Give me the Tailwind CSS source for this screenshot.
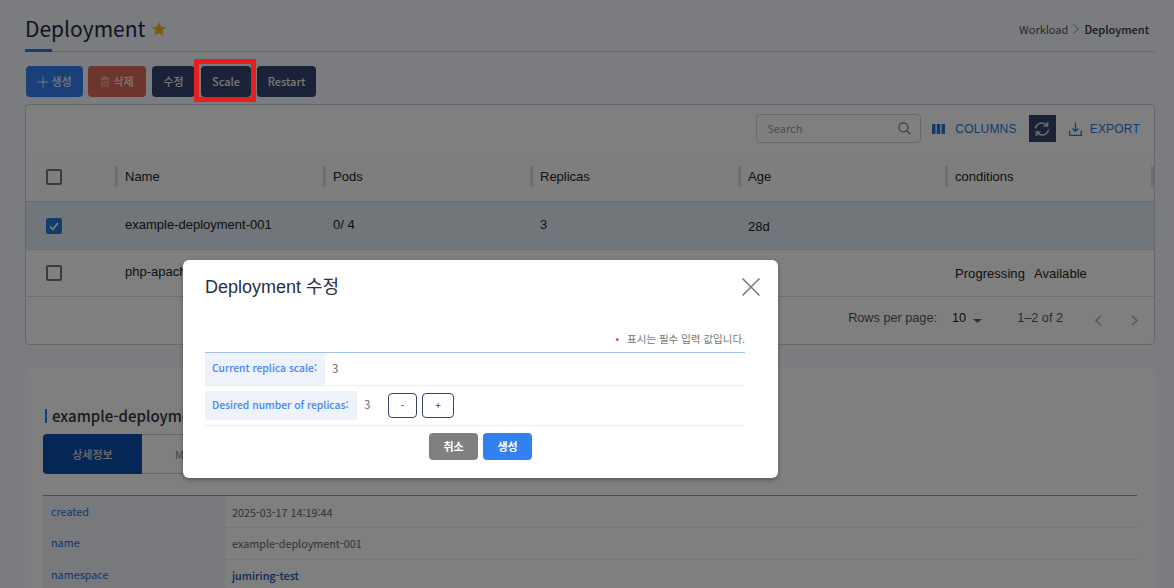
<!DOCTYPE html>
<html lang="ko">
<head>
<meta charset="utf-8">
<script src="https://cdn.jsdelivr.net/npm/@tailwindcss/browser@4"></script>
</head>
<body class="m-0 overflow-hidden font-['Noto_Sans_CJK_KR','Noto_Sans',sans-serif]">
<div class="relative h-[588px] w-[1174px] overflow-hidden bg-[#f4f8ff] pl-[25px] pr-[19px] text-[#222]">
  <header class="relative flex h-[52px] items-center justify-between border-b border-[#ccc] pt-[12px] pb-[7px]">
    <div class="flex items-center gap-[6px]">
      <h1 class="text-[21px] font-normal leading-[30px] text-[#1d2a44]">Deployment</h1>
      <svg class="mt-[2px] h-[16px] w-[16px] text-[#f5bb0b]" viewBox="0 0 24 24" fill="currentColor"><path d="M12 1.500l3.200 7 7.600.8-5.700 5.100 1.600 7.500-6.700-3.800-6.700 3.800 1.600-7.500L1.200 9.300l7.600-.8z"/></svg>
    </div>
    <div class="flex items-center pr-[6px] pt-[2px] text-[11px] leading-[16px]">
      <span class="text-[#555]">Workload</span>
      <svg class="mx-[4px] h-[10px] w-[8px] text-[#888]" viewBox="0 0 8 10" fill="none" stroke="currentColor"><path d="M1.500 .5L6.500 5l-5 4.500"/></svg>
      <span class="font-medium text-[#333]">Deployment</span>
    </div>
    <div class="absolute bottom-[-1px] left-0 h-[3px] w-[27px] bg-[#2d7ae8]"></div>
  </header>

  <div class="mt-[14px] flex h-[31px] text-[11px] font-medium leading-none text-[#f0f0f0]">
    <button class="ml-px flex w-[57px] items-center justify-center gap-[2px] rounded-[4px] bg-[#3381f0]">
      <svg class="h-[12px] w-[12px]" viewBox="0 0 12 12" fill="none" stroke="currentColor"><path d="M6 .5v11M.5 6h11"/></svg>생성</button>
    <button class="ml-[5px] flex w-[58px] items-center justify-center gap-[3px] rounded-[4px] bg-[#dc6a58]">
      <svg class="h-[11px] w-[10px] opacity-70" viewBox="0 0 10 12" fill="none" stroke="currentColor"><path d="M1.500 3h7v8h-7zM.5 3h9M3.500 3V1h3v2M3 6.500h4M3 8.500h4"/></svg>삭제</button>
    <button class="ml-[6px] w-[43px] rounded-[4px] bg-[#33446f]">수정</button>
    <button class="ml-[6px] w-[50px] rounded-[4px] bg-[#33446f]">Scale</button>
    <button class="ml-[6px] w-[59px] rounded-[4px] bg-[#33446f]">Restart</button>
  </div>

  <section class="mt-[7px] h-[241px] rounded-[4px] border border-[#ccd0d8] bg-white">
    <div class="flex h-[47px] items-center justify-end pr-[14px]">
      <div class="flex h-[29px] w-[165px] items-center justify-between rounded-[4px] border border-[#d3d3d3] pl-[10px] pr-[9px] text-[11px] text-[#999]">
        <span>Search</span>
        <svg class="h-[13px] w-[13px] text-[#777]" viewBox="0 0 14 14" fill="none" stroke="currentColor" stroke-width="1.300"><circle cx="5.800" cy="5.800" r="4.800"/><path d="M9.300 9.300L13.300 13.300"/></svg>
      </div>
      <svg class="ml-[11px] h-[10px] w-[13px] text-[#2378d6]" viewBox="0 0 13 10" fill="currentColor"><path d="M0 0h3.500v10H0zM4.700 0h3.500v10H4.700zM9.500 0H13v10H9.500z"/></svg>
      <span class="ml-[10px] font-['Liberation_Sans'] text-[12px] tracking-[0.2px] text-[#2378d6]">COLUMNS</span>
      <span class="ml-[12px] flex h-[27px] w-[27px] items-center justify-center bg-[#33446f]">
        <svg class="h-[16px] w-[16px] text-[#ddd]" viewBox="0 0 16 16" fill="none" stroke="currentColor" stroke-width="1.700"><path d="M1.500 7.500C2 4 5 2 8 2c2 0 3.500 1 4.500 2.300M14.500 8.500C14 12 11 14 8 14c-2 0-3.500-1-4.500-2.300"/><path d="M13.500 1v4h-4M2.500 15v-4h4"/></svg>
      </span>
      <svg class="ml-[13px] h-[14px] w-[13px] text-[#2378d6]" viewBox="0 0 13 14" fill="none" stroke="currentColor" stroke-width="1.200"><path d="M6.500 .5v8.500M3.500 6.500l3 3 3-3M.7 8.500v4.800h11.600V8.500"/></svg>
      <span class="ml-[8px] font-['Liberation_Sans'] text-[12px] tracking-[0.2px] text-[#2378d6]">EXPORT</span>
    </div>
    <div class="grid h-[50px] grid-cols-[89px_208px_207px_208px_207px_209px] items-center border-b border-[#ddd] bg-[#fcfcfc] font-['Liberation_Sans'] text-[13px]">
      <div class="flex justify-center pr-[34px]"><span class="h-[16px] w-[16px] rounded-[2px] border-2 border-[#777]"></span></div>
      <div class="h-[21px] border-l-[3px] border-[#ddd] pl-[7px] leading-[21px]">Name</div>
      <div class="h-[21px] border-l-[3px] border-[#ddd] pl-[7px] leading-[21px]">Pods</div>
      <div class="h-[21px] border-l-[3px] border-[#ddd] pl-[7px] leading-[21px]">Replicas</div>
      <div class="h-[21px] border-l-[3px] border-[#ddd] pl-[7px] leading-[21px]">Age</div>
      <div class="h-[21px] border-l-[3px] border-r-[3px] border-[#ddd] pl-[7px] leading-[21px]">conditions</div>
    </div>
    <div class="grid h-[48px] grid-cols-[89px_208px_207px_208px_207px_209px] items-center border-b border-[#ddd] bg-[#e0ecf2] font-['Liberation_Sans'] text-[13px]">
      <div class="flex justify-center pr-[34px]"><span class="flex h-[16px] w-[16px] items-center justify-center rounded-[2px] bg-[#2378d6]"><svg class="h-[12px] w-[12px] text-white" viewBox="0 0 12 12" fill="none" stroke="currentColor" stroke-width="1.700"><path d="M2 6.500L4.800 9.300 10 3"/></svg></span></div>
      <div class="pb-[1px] pl-[10px]">example-deployment-001</div>
      <div class="pb-[1px] pl-[10px]">0/ 4</div>
      <div class="pb-[1px] pl-[10px]">3</div>
      <div class="pl-[10px] pt-[2px]">28d</div>
      <div></div>
    </div>
    <div class="grid h-[47px] grid-cols-[89px_208px_207px_208px_207px_209px] items-center border-b border-[#ddd] font-['Liberation_Sans'] text-[13px]">
      <div class="flex justify-center pr-[34px]"><span class="h-[16px] w-[16px] rounded-[2px] border-2 border-[#777]"></span></div>
      <div class="pb-[2px] pl-[10px]">php-apache</div>
      <div></div><div></div><div></div>
      <div class="flex gap-[9px] whitespace-nowrap pl-[10px] pt-[1px] tracking-[0.05px]"><span>Progressing</span><span>Available</span></div>
    </div>
    <div class="flex h-[47px] items-center justify-end pb-[3px] font-['Liberation_Sans'] text-[12.700px] text-[#555]">
      <span>Rows per page:</span>
      <span class="ml-[15px] text-[#222]">10</span>
      <svg class="ml-[7px] mt-[3px] h-[4px] w-[9px] text-[#666]" viewBox="0 0 9 4" fill="currentColor"><path d="M0 0h9L4.500 4z"/></svg>
      <span class="ml-[35px]">1–2 of 2</span>
      <svg class="ml-[32px] mt-[3px] h-[11px] w-[7px] text-[#aaa]" viewBox="0 0 7 11" fill="none" stroke="currentColor" stroke-width="1.500"><path d="M6 .7L1 5.500l5 4.800"/></svg>
      <svg class="ml-[29px] mr-[16px] mt-[3px] h-[11px] w-[7px] text-[#aaa]" viewBox="0 0 7 11" fill="none" stroke="currentColor" stroke-width="1.500"><path d="M1 .7l5 4.800-5 4.800"/></svg>
    </div>
  </section>

  <section class="mt-[22px] h-[260px] rounded-[8px] bg-white px-[18px] pt-[37px]">
    <div class="ml-[2px] flex h-[24px] items-center">
      <span class="h-[14px] w-[2px] bg-[#2d7ae8]"></span>
      <span class="ml-[5px] text-[15px] font-medium text-[#333]">example-deployment-001</span>
    </div>
    <div class="mt-[6px] flex h-[40px] text-[11px]">
      <div class="flex w-[99px] items-center justify-center rounded-l-[4px] bg-[#0a4fb0] font-medium text-[#ddd]">상세정보</div>
      <div class="w-[99px] border border-l-0 border-[#ccc] pl-[33px] leading-[38px] text-[#888]">Manifest</div>
    </div>
    <div class="mt-[21px] border-t border-[#8c9fc4] text-[10.800px]">
      <div class="flex h-[32px] border-b border-[#eee]"><div class="w-[182px] bg-[#eef2fb] pl-[8px] pt-[7px] text-[#2d6fd6]">created</div><div class="pl-[7px] pt-[8px] text-[#666]">2025-03-17 14:19:44</div></div>
      <div class="flex h-[32px] border-b border-[#eee]"><div class="w-[182px] bg-[#eef2fb] pl-[8px] pt-[6px] text-[#2d6fd6]">name</div><div class="pl-[7px] pt-[7px] text-[#666]">example-deployment-001</div></div>
      <div class="flex h-[32px]"><div class="w-[182px] bg-[#eef2fb] pl-[8px] pt-[6px] text-[#2d6fd6]">namespace</div><div class="pl-[7px] pt-[7px] font-medium text-[#1a4fa8]">jumiring-test</div></div>
    </div>
  </section>

  <div class="absolute inset-0 bg-black/50"></div>
  <div class="absolute left-[194px] top-[59px] h-[43px] w-[62px] border-[5px] border-[#e81f1f]"></div>

  <div class="absolute left-[183px] top-[260px] h-[218px] w-[595px] rounded-[6px] bg-white pl-[22px] pr-[33px] shadow-[0_2px_4px_rgba(0,0,0,0.3)]">
    <div class="flex h-[54px] items-center justify-between">
      <h2 class="font-['Liberation_Sans','Noto_Sans_CJK_KR',sans-serif] text-[18px] font-normal text-[#27304a]">Deployment 수정</h2>
      <svg class="mr-[-15px] h-[18px] w-[18px] text-[#777]" viewBox="0 0 18 18" fill="none" stroke="currentColor" stroke-width="1.500"><path d="M.5 .5l17 17M17.500 .5l-17 17"/></svg>
    </div>
    <p class="mt-[17px] h-[21px] text-right text-[10.500px] leading-[15px] text-[#777]"><span class="mr-[8px] text-[#e81f3f]">•</span>표시는 필수 입력 값입니다.</p>
    <div class="border-t border-[#a3c2f0] text-[10.300px]">
      <div class="flex h-[33px] border-b border-[#eee]">
        <div class="flex w-[120px] items-center whitespace-nowrap bg-[#eef2fb] pb-[2px] pl-[7px] font-medium text-[#4287f5]">Current replica scale:</div>
        <div class="flex items-center pl-[7px] text-[11.500px] text-[#666]">3</div>
      </div>
      <div class="flex h-[40px] items-center border-b border-[#eee] pb-[1px]">
        <div class="flex h-[29px] w-[152px] items-center whitespace-nowrap bg-[#eef2fb] pl-[7px] font-medium text-[#4287f5]">Desired number of replicas:</div>
        <div class="ml-[7px] w-[24px] text-[11.500px] text-[#666]">3</div>
        <button class="h-[25px] w-[29px] rounded-[4px] border border-[#33446f] text-[#444]">-</button>
        <button class="ml-[5px] h-[25px] w-[32px] rounded-[4px] border border-[#33446f] text-[#444]">+</button>
      </div>
    </div>
    <div class="mt-[7px] flex justify-center gap-[5px] pl-[11px] text-[11px] font-bold text-white">
      <button class="h-[27px] w-[49px] rounded-[4px] bg-[#808080]">취소</button>
      <button class="h-[27px] w-[49px] rounded-[4px] bg-[#3381f0]">생성</button>
    </div>
  </div>
</div>
</body>
</html>
